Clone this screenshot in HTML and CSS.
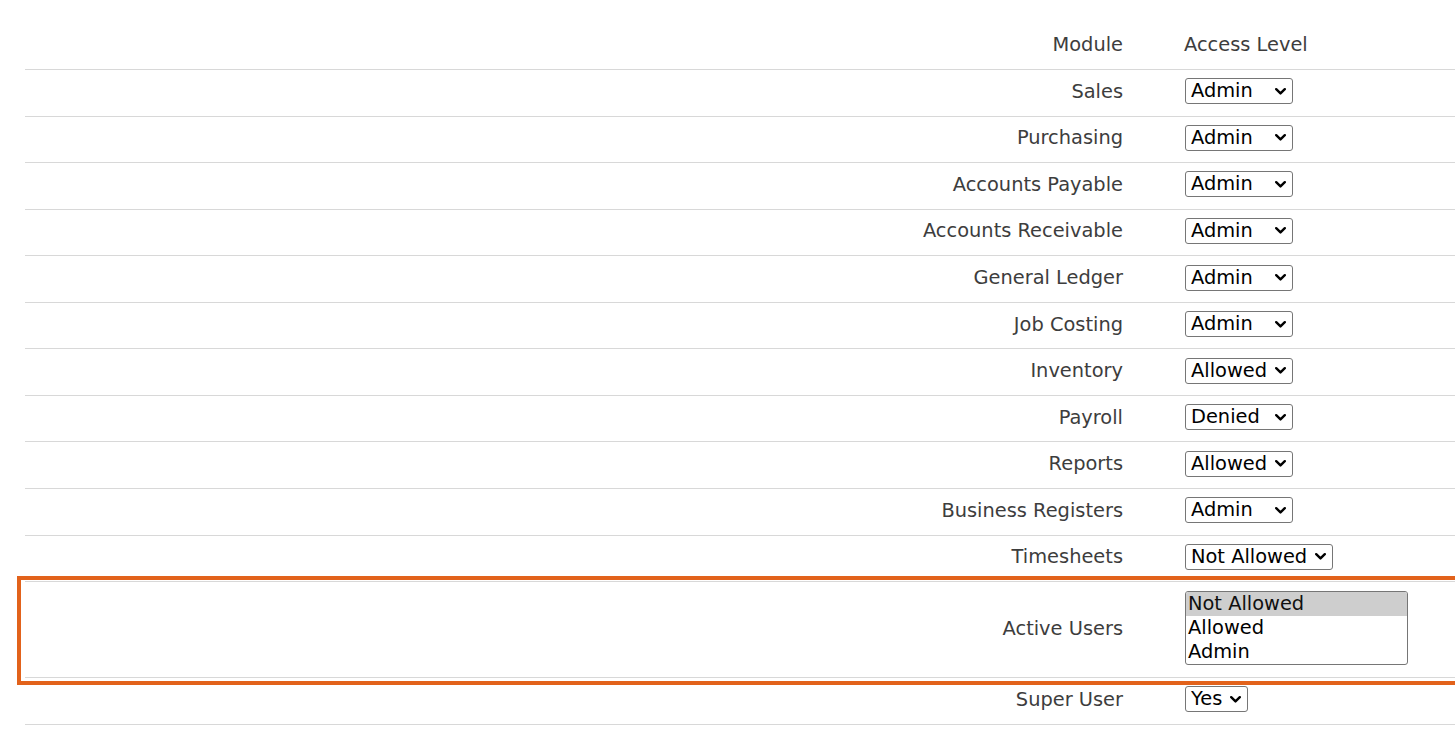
FILE: index.html
```html
<!DOCTYPE html>
<html>
<head>
<meta charset="utf-8">
<link rel="stylesheet" href="styles.css">
</head>
<body>
<div class="perm-table">
  <div class="row head">
    <div class="label">Module</div>
    <div class="ctrl">Access Level</div>
  </div>
  <div class="row">
    <div class="label">Sales</div>
    <div class="ctrl"><select class="dd"><option>Denied</option><option>Allowed</option><option selected>Admin</option></select></div>
  </div>
  <div class="row">
    <div class="label">Purchasing</div>
    <div class="ctrl"><select class="dd"><option>Denied</option><option>Allowed</option><option selected>Admin</option></select></div>
  </div>
  <div class="row">
    <div class="label">Accounts Payable</div>
    <div class="ctrl"><select class="dd"><option>Denied</option><option>Allowed</option><option selected>Admin</option></select></div>
  </div>
  <div class="row">
    <div class="label">Accounts Receivable</div>
    <div class="ctrl"><select class="dd"><option>Denied</option><option>Allowed</option><option selected>Admin</option></select></div>
  </div>
  <div class="row">
    <div class="label">General Ledger</div>
    <div class="ctrl"><select class="dd"><option>Denied</option><option>Allowed</option><option selected>Admin</option></select></div>
  </div>
  <div class="row">
    <div class="label">Job Costing</div>
    <div class="ctrl"><select class="dd"><option>Denied</option><option>Allowed</option><option selected>Admin</option></select></div>
  </div>
  <div class="row">
    <div class="label">Inventory</div>
    <div class="ctrl"><select class="dd"><option>Denied</option><option selected>Allowed</option><option>Admin</option></select></div>
  </div>
  <div class="row">
    <div class="label">Payroll</div>
    <div class="ctrl"><select class="dd"><option selected>Denied</option><option>Allowed</option><option>Admin</option></select></div>
  </div>
  <div class="row">
    <div class="label">Reports</div>
    <div class="ctrl"><select class="dd"><option>Denied</option><option selected>Allowed</option><option>Admin</option></select></div>
  </div>
  <div class="row">
    <div class="label">Business Registers</div>
    <div class="ctrl"><select class="dd"><option>Denied</option><option>Allowed</option><option selected>Admin</option></select></div>
  </div>
  <div class="row">
    <div class="label">Timesheets</div>
    <div class="ctrl"><select class="dd"><option selected>Not Allowed</option><option>Allowed</option><option>Admin</option></select></div>
  </div>
  <div class="row tall">
    <div class="label">Active Users</div>
    <div class="ctrl"><select class="listbox" size="3"><option selected>Not Allowed</option><option>Allowed</option><option>Admin</option></select></div>
    <div class="highlight-box"></div>
  </div>
  <div class="row">
    <div class="label">Super User</div>
    <div class="ctrl"><select class="dd"><option selected>Yes</option><option>No</option></select></div>
  </div>
</div>
</body>
</html>
```

FILE: styles.css
```css
html, body {
  margin: 0;
  padding: 0;
  background: #ffffff;
  overflow: hidden;
}

body {
  font-family: "DejaVu Sans", sans-serif;
  font-size: 19.4px;
  color: #3d3d3d;
}

.perm-table {
  margin: 23.5px 0 0 25px;
}

.row {
  position: relative;
  display: grid;
  grid-template-columns: 1110px 1fr;
  align-items: center;
  height: 45.55px;
  border-bottom: 1px solid #d8d8d8;
}

.row .label {
  text-align: right;
  padding-right: 12px;
  padding-bottom: 3px;
}

.row .ctrl {
  padding-left: 50px;
  padding-bottom: 3px;
}

.row.head .ctrl {
  padding-left: 49px;
}

.row.tall {
  height: 95px;
}

select {
  font-family: "DejaVu Sans", sans-serif;
  font-size: 19.4px;
  color: #000;
}

select.dd {
  -webkit-appearance: none;
  appearance: none;
  box-sizing: border-box;
  height: 26px;
  margin: 0;
  padding: 0 24px 0 5px;
  border: 1px solid #767676;
  border-radius: 3px;
  background-color: #fff;
  background-image: url("data:image/svg+xml,%3Csvg xmlns='http://www.w3.org/2000/svg' width='11' height='7' viewBox='0 0 11 7'%3E%3Cpath d='M1.2 1.2 L5.5 5.4 L9.8 1.2' fill='none' stroke='%23000' stroke-width='2.4' stroke-linecap='round' stroke-linejoin='round'/%3E%3C/svg%3E");
  background-repeat: no-repeat;
  background-position: right 6px center;
  background-size: 11px 7px;
  line-height: 24px;
}

select.listbox {
  width: 223px;
  overflow: hidden;
  display: block;
  border: 1px solid #767676;
  border-radius: 3px;
}

.highlight-box {
  position: absolute;
  left: -8px;
  right: -20px;
  top: -6px;
  bottom: -8px;
  border: 4px solid #e2621b;
  pointer-events: none;
}
```
